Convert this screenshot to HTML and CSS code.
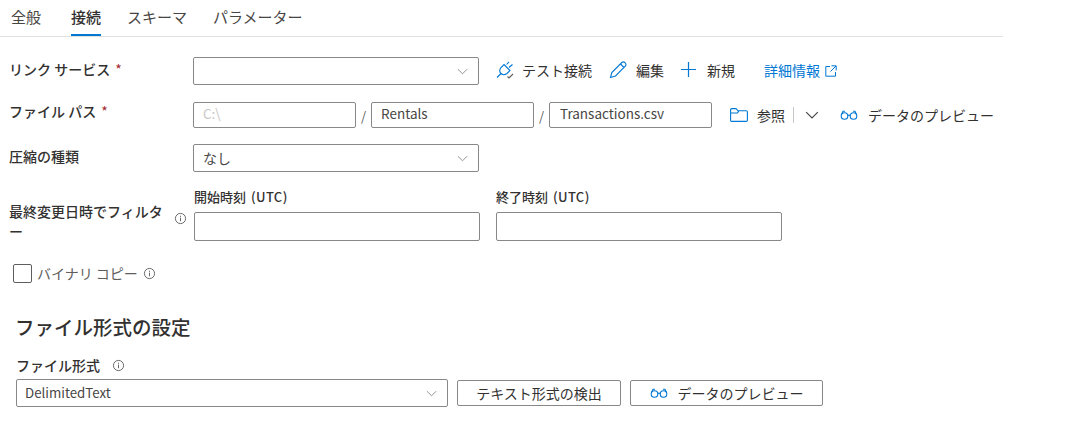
FILE: index.html
```html
<!DOCTYPE html>
<html lang="ja">
<head>
  <meta charset="UTF-8" />
  <title>接続</title>
  <link rel="stylesheet" href="styles.css">
</head>
<body>

<svg width="0" height="0" class="defs">
  <symbol id="chev" viewBox="0 0 12 12"><path d="M1 3.500 6 8.500 11 3.500" fill="none" stroke="currentColor"/></symbol>
  <symbol id="info" viewBox="0 0 14 14"><circle cx="7" cy="7" r="5.500" fill="none" stroke="#605e5c"/><path d="M7 6v4M7 4v1.200" stroke="#605e5c" fill="none"/></symbol>
  <symbol id="glasses" viewBox="0 0 18 10"><g fill="none" stroke="#0078d4" stroke-width="1.100"><circle cx="4.500" cy="6" r="3.300"/><circle cx="13.500" cy="6" r="3.300"/><path d="M7.800 5.500Q9 4.700 10.200 5.500M1.300 5 3 1.200H5M16.700 5 15 1.200H13"/></g></symbol>
</svg>

<nav class="tabs">
  <a class="tab">全般</a>
  <a class="tab active">接続</a>
  <a class="tab">スキーマ</a>
  <a class="tab">パラメーター</a>
</nav>

<section class="form">
  <div class="row row-link">
    <label class="label">リンク サービス <i class="req">*</i></label>
    <div class="select sel-wide"><svg class="chev"><use href="#chev"/></svg></div>
    <div class="actions">
      <a class="action act-test">
        <svg class="icon" viewBox="0 0 18 18"><g fill="none" stroke="#0078d4" stroke-width="1.100"><path d="M8 3.500 14 9.500 11 12.500C9 14 6.500 14 5 12.500S3.500 8.500 5 6.500Z"/><path d="M5 12.500 1 16.500M10.500 3.500 13 .8M13 6.500 16.500 3.500"/><path d="M11.500 15.500 13 17 17 13" stroke="#605e5c"/></g></svg>
        テスト接続</a>
      <a class="action act-edit">
        <svg class="icon" viewBox="0 0 18 18"><path d="M1.500 16.500 2.800 11.500 12.800 1.500C13.800.7 15 .7 16 1.700S17.200 4 16.500 5L6.500 15ZM11.500 3 15 6.500" fill="none" stroke="#0078d4" stroke-width="1.100"/></svg>
        編集</a>
      <a class="action act-new">
        <svg class="icon" viewBox="0 0 16 16"><path d="M8 0V16M0 8H16" stroke="#0078d4" stroke-width="1.300" fill="none"/></svg>
        新規</a>
      <a class="more">詳細情報
        <svg class="ext" viewBox="0 0 12 12"><path d="M5 1.500H.8V11.200H10.500V7M6.500.8H11.200V5.500M11 1 5.500 6.500" fill="none" stroke="#0078d4"/></svg>
      </a>
    </div>
  </div>

  <div class="row row-path">
    <label class="label">ファイル パス <i class="req">*</i></label>
    <div class="input path ghost">C:\</div>
    <span class="slash">/</span>
    <div class="input path">Rentals</div>
    <span class="slash">/</span>
    <div class="input path">Transactions.csv</div>
    <div class="actions actions-path">
      <a class="action act-browse">
        <svg class="icon folder" viewBox="0 0 18 14"><path d="M.6 12.500V1.800C.6 1 1 .6 1.800 .6H6L8 2.800H16.200C17 2.800 17.400 3.200 17.400 4V12.200C17.400 13 17 13.400 16.200 13.400H1.500C1 13.400 .6 13 .6 12.500ZM.6 5H7.500L8.800 2.900" fill="none" stroke="#0078d4" stroke-width="1.100"/></svg>
        参照</a>
      <span class="vline"></span>
      <svg class="chev chev-dark"><use href="#chev"/></svg>
      <a class="action act-preview"><svg class="glasses"><use href="#glasses"/></svg>データのプレビュー</a>
    </div>
  </div>

  <div class="row row-comp">
    <label class="label">圧縮の種類</label>
    <div class="select sel-wide">なし<svg class="chev"><use href="#chev"/></svg></div>
  </div>

  <div class="row row-filter">
    <label class="label label-filter">最終変更日時でフィルタ<br>ー<svg class="info info-filter"><use href="#info"/></svg></label>
    <div class="field">
      <div class="sublabel"><b>開始時刻</b> <span class="utc">(UTC)</span></div>
      <div class="input time"></div>
    </div>
    <div class="field">
      <div class="sublabel"><b>終了時刻</b> <span class="utc">(UTC)</span></div>
      <div class="input time"></div>
    </div>
  </div>

  <div class="binary">
    <span class="check"></span>
    <span class="binary-text">バイナリ コピー</span>
    <svg class="info"><use href="#info"/></svg>
  </div>

  <h2 class="heading">ファイル形式の設定</h2>

  <div class="format-label">ファイル形式<svg class="info"><use href="#info"/></svg></div>
  <div class="format-row">
    <div class="select sel-format">DelimitedText<svg class="chev"><use href="#chev"/></svg></div>
    <button class="btn btn-detect">テキスト形式の検出</button>
    <button class="btn btn-preview"><svg class="glasses"><use href="#glasses"/></svg>データのプレビュー</button>
  </div>
</section>

</body>
</html>
```

FILE: styles.css
```css
html, body {
  margin: 0;
  height: 422px;
  overflow: hidden;
  background: #fff;
}

body {
  font-family: "Noto Sans CJK JP", "Open Sans", sans-serif;
  font-size: 14px;
  color: #323130;
}

.defs {
  position: absolute;
}

.tabs {
  display: flex;
  width: 1003px;
  height: 37px;
  box-sizing: border-box;
  border-bottom: 1px solid #e1dfdd;
  padding-left: 11px;
  gap: 26px;
}

.tab {
  font-size: 15px;
  line-height: 33px;
  height: 36px;
  box-sizing: border-box;
  color: #484644;
}

.tab:first-child {
  margin-right: 4px;
}

.tab.active {
  color: #323130;
  font-weight: 500;
  border-bottom: 2px solid #0078d4;
}

.form {
  position: relative;
}

.row {
  display: flex;
  align-items: center;
}

.row-link { margin-top: 20px; }
.row-path { margin-top: 17px; }
.row-comp { margin-top: 16px; }
.row-filter { margin-top: 16px; align-items: flex-end; }

.label {
  width: 184px;
  padding-left: 9px;
  flex: none;
  font-weight: 500;
  color: #323130;
  position: relative;
  top: -2px;
}

.row-path .label {
  top: -4px;
}

.req {
  color: #a4262c;
  font-style: normal;
  font-weight: 400;
  margin-left: 2px;
}

.select, .input {
  height: 28px;
  box-sizing: border-box;
  border: 1px solid #8a8886;
  border-radius: 2px;
  padding-left: 9px;
  line-height: 26px;
  color: #484644;
  display: flex;
  align-items: center;
  flex: none;
}

.sel-wide { width: 286px; }

.chev {
  width: 11px;
  height: 11px;
  color: #8a8886;
  margin-left: auto;
  margin-right: 10px;
  flex: none;
}

.chev-dark {
  color: #484644;
  width: 14px;
  height: 14px;
  margin: 0 0 0 11px;
}

.actions {
  display: flex;
  align-items: center;
  flex: none;
}

.row-link .actions {
  position: relative;
  top: -1px;
}

.action {
  display: flex;
  align-items: center;
  white-space: nowrap;
  color: #323130;
}

.icon {
  flex: none;
}

.act-test { margin-left: 17px; }
.act-test .icon { width: 18px; height: 18px; margin-right: 8px; }
.act-edit { margin-left: 17px; }
.act-edit .icon { width: 18px; height: 18px; margin-right: 9px; }
.act-new { margin-left: 17px; }
.act-new .icon { width: 15px; height: 15px; margin-right: 11px; position: relative; top: -1px; }

.more {
  margin-left: 29px;
  color: #0078d4;
  display: flex;
  align-items: center;
  gap: 5px;
}

.ext {
  width: 12px;
  height: 12px;
  position: relative;
  top: 1px;
}

.path {
  width: 163px;
  height: 26px;
  line-height: 24px;
  font-size: 13.5px;
  padding-bottom: 4px;
  position: relative;
}

.path:nth-of-type(3) {
  padding-left: 10px;
}

.ghost {
  color: #c8c6c4;
}

.slash {
  width: 15px;
  text-align: center;
  flex: none;
  color: #605e5c;
  font-size: 13px;
}

.actions-path {
  margin-left: 18px;
}

.folder {
  width: 18px;
  height: 14px;
  margin-right: 9px;
}

.vline {
  width: 1px;
  height: 16px;
  background: #c8c6c4;
  margin-left: 8px;
}

.glasses {
  width: 18px;
  height: 10px;
  margin-right: 10px;
  flex: none;
}

.act-preview {
  margin-left: 21px;
}

.label-filter {
  width: 167px;
  padding-right: 18px;
  line-height: 20px;
  top: 0;
}

.info {
  width: 13px;
  height: 13px;
  flex: none;
}

.info-filter {
  position: absolute;
  left: 174px;
  top: 11px;
}

.field {
  margin-right: 16px;
  width: 286px;
  flex: none;
}

.sublabel {
  font-size: 13px;
  line-height: 18px;
  margin-bottom: 6px;
  color: #323130;
}

.sublabel b {
  font-weight: 500;
  font-size: 13px;
}

.utc {
  font-size: 13px;
  font-weight: 500;
  letter-spacing: 0.4px;
  margin-left: 2px;
}

.time {
  width: 286px;
  height: 29px;
}

.binary {
  display: flex;
  align-items: center;
  margin-top: 22px;
  padding-left: 13px;
  height: 20px;
}

.check {
  width: 19px;
  height: 19px;
  box-sizing: border-box;
  border: 1px solid #605e5c;
  border-radius: 2px;
  margin-right: 5px;
}

.binary-text {
  color: #605e5c;
  margin-right: 5px;
}

.heading {
  margin: 31px 0 0 15px;
  font-size: 19.5px;
  line-height: 26px;
  font-weight: 500;
  color: #323130;
}

.format-label {
  display: flex;
  align-items: center;
  margin: 16px 0 0 16px;
  height: 18px;
  font-weight: 500;
  gap: 12px;
}

.format-row {
  display: flex;
  align-items: center;
  margin: 5px 0 0 16px;
}

.sel-format {
  width: 432px;
  font-size: 13.3px;
  padding-left: 8px;
}

.btn {
  height: 26px;
  box-sizing: border-box;
  border: 1px solid #8a8886;
  border-radius: 2px;
  background: #fff;
  font: inherit;
  color: #323130;
  display: flex;
  align-items: center;
  justify-content: center;
  padding: 0;
}

.btn-detect { width: 164px; margin-left: 9px; }
.btn-preview { width: 193px; margin-left: 9px; }
```
